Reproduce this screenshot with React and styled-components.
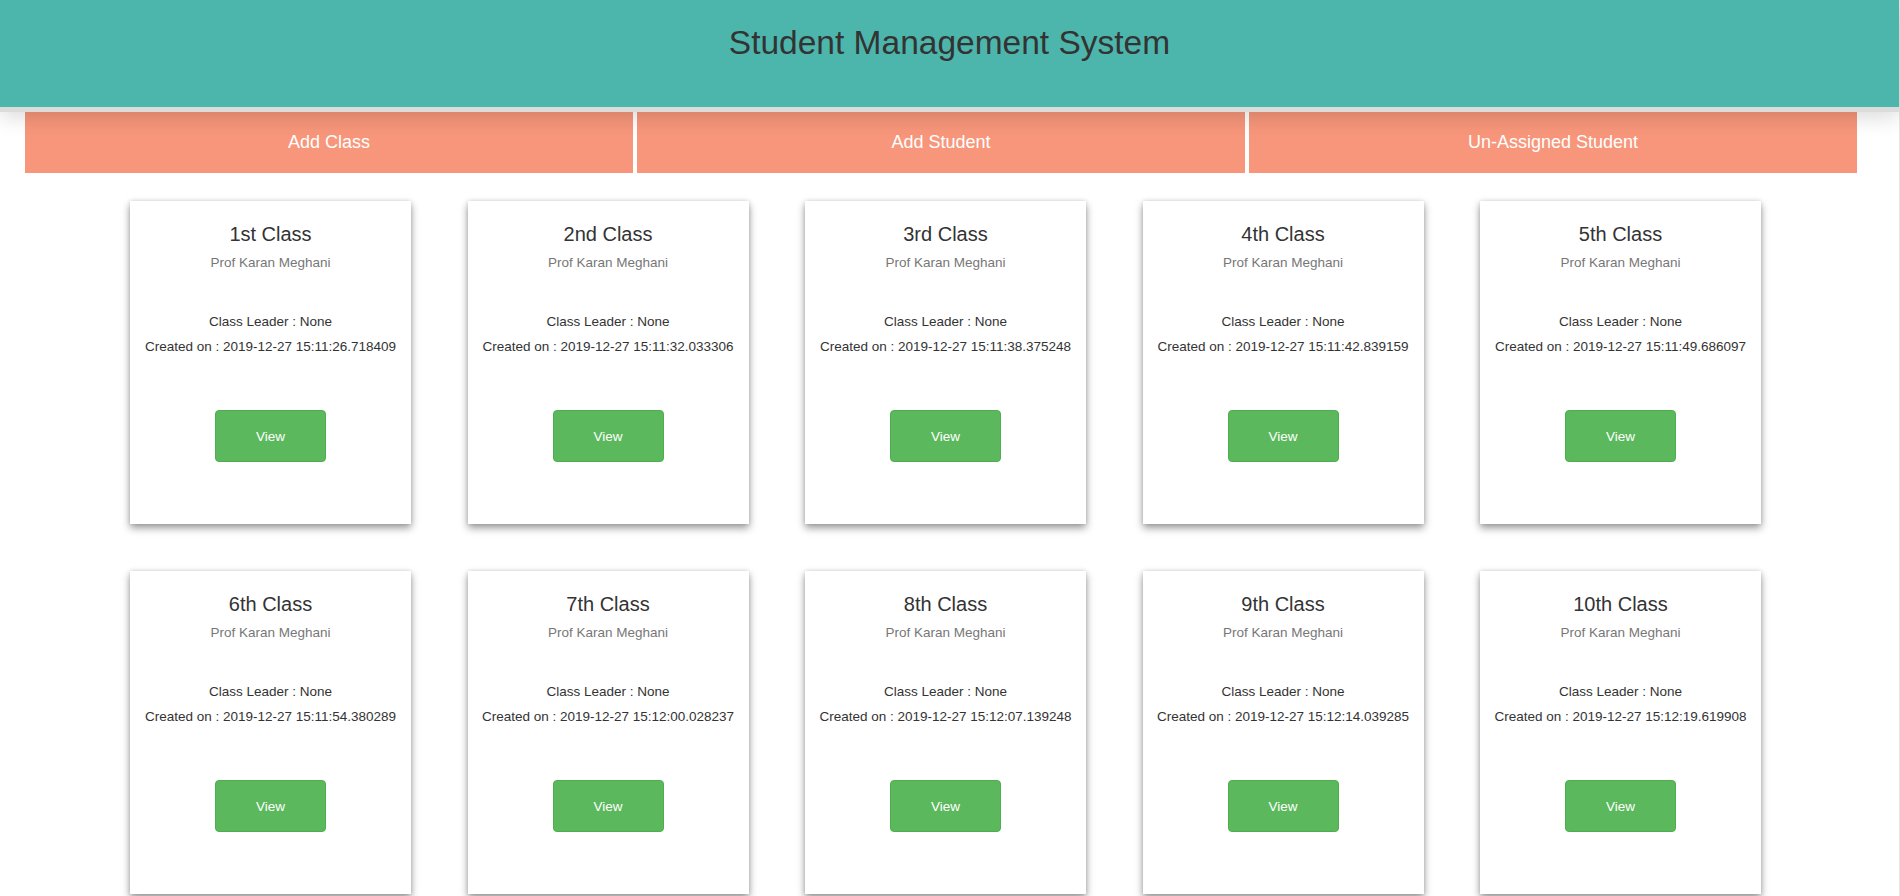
import styled, { createGlobalStyle } from "styled-components";

const GlobalStyle = createGlobalStyle`
  html, body {
    margin: 0;
    padding: 0;
    background: #fff;
  }
  body {
    font-family: "Liberation Sans", Arial, Helvetica, sans-serif;
    color: #333;
  }
`;

const Page = styled.div`
  min-height: 896px;
  border-right: 1px solid #e6e6e6;
  box-sizing: border-box;
`;

const Header = styled.header`
  position: relative;
  z-index: 1;
  height: 107px;
  padding-top: 26px;
  box-sizing: border-box;
  background: #4db6ac;
  box-shadow: 0 5px 0 #dcdcdc, 0 10px 20px rgba(0, 0, 0, 0.15);
  text-align: center;
`;

const Title = styled.h1`
  margin: 0;
  font-size: 33.5px;
  line-height: 33.5px;
  font-weight: 400;
  color: #333;
`;

const Nav = styled.nav`
  display: flex;
  gap: 4px;
  margin: 5px 42px 0 25px;
`;

const NavButton = styled.button`
  flex: 1;
  height: 61px;
  border: none;
  background: #f7967a;
  color: #fff;
  font-family: inherit;
  font-size: 18px;
  cursor: pointer;
`;

const Grid = styled.div`
  display: flex;
  flex-wrap: wrap;
  gap: 47px 56.5px;
  margin: 28px 42px 0 25px;
  padding-left: 105px;
`;

const Card = styled.div`
  width: 281px;
  height: 323px;
  box-sizing: border-box;
  padding: 22px 8px 0;
  display: flex;
  flex-direction: column;
  align-items: center;
  background: #fff;
  box-shadow: 0 4px 8px rgba(0, 0, 0, 0.4), 0 0 4px rgba(0, 0, 0, 0.12);
  text-align: center;
`;

const CardTitle = styled.h3`
  margin: 0;
  font-size: 20px;
  line-height: 22px;
  font-weight: 400;
  color: #333;
`;

const Teacher = styled.div`
  margin-top: 9px;
  font-size: 13.5px;
  line-height: 18px;
  color: #777;
`;

const Info = styled.div`
  margin-top: 36.5px;
  font-size: 13.5px;
  line-height: 25px;
  color: #333;
  white-space: nowrap;
`;

const ViewButton = styled.button`
  margin-top: 51.5px;
  width: 111px;
  height: 52px;
  border: 1px solid #4cae4c;
  border-radius: 4px;
  background: #5cb85c;
  color: #fff;
  font-family: inherit;
  font-size: 13.5px;
  cursor: pointer;
`;

const classes = [
  ["1st Class", "2019-12-27 15:11:26.718409"],
  ["2nd Class", "2019-12-27 15:11:32.033306"],
  ["3rd Class", "2019-12-27 15:11:38.375248"],
  ["4th Class", "2019-12-27 15:11:42.839159"],
  ["5th Class", "2019-12-27 15:11:49.686097"],
  ["6th Class", "2019-12-27 15:11:54.380289"],
  ["7th Class", "2019-12-27 15:12:00.028237"],
  ["8th Class", "2019-12-27 15:12:07.139248"],
  ["9th Class", "2019-12-27 15:12:14.039285"],
  ["10th Class", "2019-12-27 15:12:19.619908"],
];

const App = () => {
  return (
    <>
      <GlobalStyle />
      <Page>
        <Header>
          <Title>Student Management System</Title>
        </Header>
        <Nav>
          <NavButton>Add Class</NavButton>
          <NavButton>Add Student</NavButton>
          <NavButton>Un-Assigned Student</NavButton>
        </Nav>
        <Grid>
          {classes.map(([name, created]) => (
            <Card key={name}>
              <CardTitle>{name}</CardTitle>
              <Teacher>Prof Karan Meghani</Teacher>
              <Info>
                <div>Class Leader : None</div>
                <div>Created on : {created}</div>
              </Info>
              <ViewButton>View</ViewButton>
            </Card>
          ))}
        </Grid>
      </Page>
    </>
  );
};

export default App;
